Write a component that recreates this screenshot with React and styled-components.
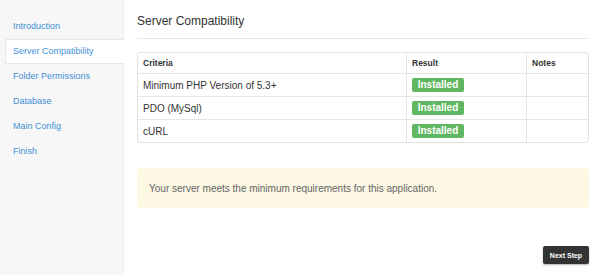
import React from "react";
import styled, { createGlobalStyle } from "styled-components";

const GlobalStyle = createGlobalStyle`
  html, body {
    margin: 0;
    padding: 0;
    background: #fff;
    font-family: "Liberation Sans", Arial, sans-serif;
  }
`;

const Layout = styled.div`
  display: flex;
  height: 275px;
  width: 600px;
  overflow: hidden;
`;

const Sidebar = styled.nav`
  width: 124px;
  flex-shrink: 0;
  background: #f7f7f7;
  border-right: 1px solid #ebebeb;
  padding: 14px 0 0 5px;
  box-sizing: border-box;
  display: flex;
  flex-direction: column;
`;

const NavItem = styled.a`
  display: block;
  height: 25px;
  line-height: 23px;
  padding-left: 7px;
  font-size: 9px;
  color: #3f8fd6;
  text-decoration: none;
  box-sizing: border-box;
  background: ${(p) => (p.$active ? "#fff" : "transparent")};
  border: 1px solid ${(p) => (p.$active ? "#e6e6e6" : "transparent")};
  border-right: none;
  margin-right: ${(p) => (p.$active ? "-1px" : "0")};
`;

const Main = styled.main`
  flex: 1;
  padding: 14px 11px 0 13px;
  display: flex;
  flex-direction: column;
`;

const Title = styled.h1`
  margin: 0;
  font-size: 12px;
  font-weight: normal;
  color: #333;
  padding-bottom: 10px;
  border-bottom: 1px solid #e8e8e8;
`;

const TableWrap = styled.div`
  margin-top: 13px;
  border: 1px solid #e2e2e2;
  border-radius: 3px;
  overflow: hidden;
`;

const Table = styled.table`
  width: 100%;
  border-collapse: collapse;
  font-size: 10px;
  color: #333;
`;

const Th = styled.th`
  text-align: left;
  font-size: 8.5px;
  font-weight: bold;
  color: #333;
  height: 20px;
  padding: 0 5px;
  border-left: 1px solid #e6e6e6;
  &:first-child { border-left: none; }
`;

const Td = styled.td`
  height: 22px;
  padding: 0 5px;
  border-top: 1px solid #e6e6e6;
  border-left: 1px solid #e6e6e6;
  &:first-child { border-left: none; }
`;

const Badge = styled.span`
  display: inline-block;
  background: #5fb761;
  color: #fff;
  font-weight: bold;
  font-size: 10px;
  line-height: 14px;
  width: 52px;
  text-align: center;
  border-radius: 2px;
`;

const Alert = styled.div`
  margin-top: 25px;
  background: #fcf8e3;
  border-radius: 3px;
  height: 40px;
  display: flex;
  align-items: center;
  padding: 0 12px;
  font-size: 10px;
  color: #666;
`;

const Footer = styled.div`
  display: flex;
  justify-content: flex-end;
  margin-top: 38px;
`;

const NextButton = styled.button`
  background: #333;
  color: #fff;
  border: none;
  border-radius: 2px;
  font-family: inherit;
  font-weight: bold;
  font-size: 7px;
  height: 18px;
  width: 46px;
  padding: 0;
  box-shadow: 0 1px 2px rgba(0, 0, 0, 0.3);
`;

const steps = [
  "Introduction",
  "Server Compatibility",
  "Folder Permissions",
  "Database",
  "Main Config",
  "Finish",
];

const checks = ["Minimum PHP Version of 5.3+", "PDO (MySql)", "cURL"];

export default function App() {
  return (
    <>
      <GlobalStyle />
      <Layout>
        <Sidebar>
          {steps.map((s) => (
            <NavItem key={s} href="#" $active={s === "Server Compatibility"}>
              {s}
            </NavItem>
          ))}
        </Sidebar>
        <Main>
          <Title>Server Compatibility</Title>
          <TableWrap>
            <Table>
              <thead>
                <tr>
                  <Th style={{ width: 258 }}>Criteria</Th>
                  <Th style={{ width: 109 }}>Result</Th>
                  <Th>Notes</Th>
                </tr>
              </thead>
              <tbody>
                {checks.map((c) => (
                  <tr key={c}>
                    <Td>{c}</Td>
                    <Td>
                      <Badge>Installed</Badge>
                    </Td>
                    <Td />
                  </tr>
                ))}
              </tbody>
            </Table>
          </TableWrap>
          <Alert>Your server meets the minimum requirements for this application.</Alert>
          <Footer>
            <NextButton>Next Step</NextButton>
          </Footer>
        </Main>
      </Layout>
    </>
  );
}
